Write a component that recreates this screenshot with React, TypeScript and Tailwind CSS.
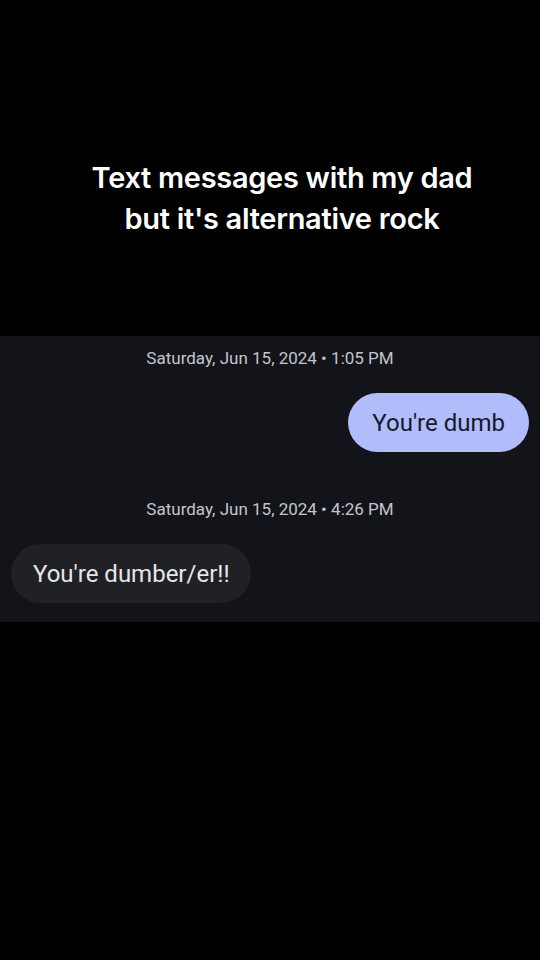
import React from 'react';

type Msg = { stamp: string; text: string; mine: boolean };

const messages: Msg[] = [
  { stamp: 'Saturday, Jun 15, 2024 • 1:05 PM', text: "You're dumb", mine: true },
  { stamp: 'Saturday, Jun 15, 2024 • 4:26 PM', text: "You're dumber/er!!", mine: false },
];

const App: React.FC = () => {
  return (
    <div className="w-[540px] h-[960px] bg-black flex flex-col" style={{ fontFamily: 'Roboto, "Noto Sans", sans-serif' }}>
      <div className="h-[336px] flex justify-center pt-[157px] pl-[24px]">
        <h1
          className="text-white text-[29px] leading-[41px] font-semibold text-center tracking-[-0.3px]"
          style={{ fontFamily: 'Inter, "Liberation Sans", sans-serif' }}
        >
          Text messages with my dad
          <br />
          but it's alternative rock
        </h1>
      </div>
      <div className="bg-[#131419] flex flex-col pt-[10px] pb-[19px]">
        {messages.map((m, i) => (
          <div key={i} className="flex flex-col">
            <div className="text-center text-[#c4c5cb] text-[17px] leading-[24px] mb-[23px]">{m.stamp}</div>
            <div className={`flex ${m.mine ? 'justify-end pr-[11px] mb-[45px]' : 'justify-start pl-[11px]'}`}>
              <div
                className={`h-[59px] flex items-center rounded-full text-[24px] ${
                  m.mine ? 'px-[24px] bg-[#b1bcfa] text-[#15192b]' : 'pl-[22px] pr-[21px] bg-[#202125] text-[#e6e6ea]'
                }`}
              >
                {m.text}
              </div>
            </div>
          </div>
        ))}
      </div>
      <div className="flex-1 bg-black" />
    </div>
  );
};

export default App;
